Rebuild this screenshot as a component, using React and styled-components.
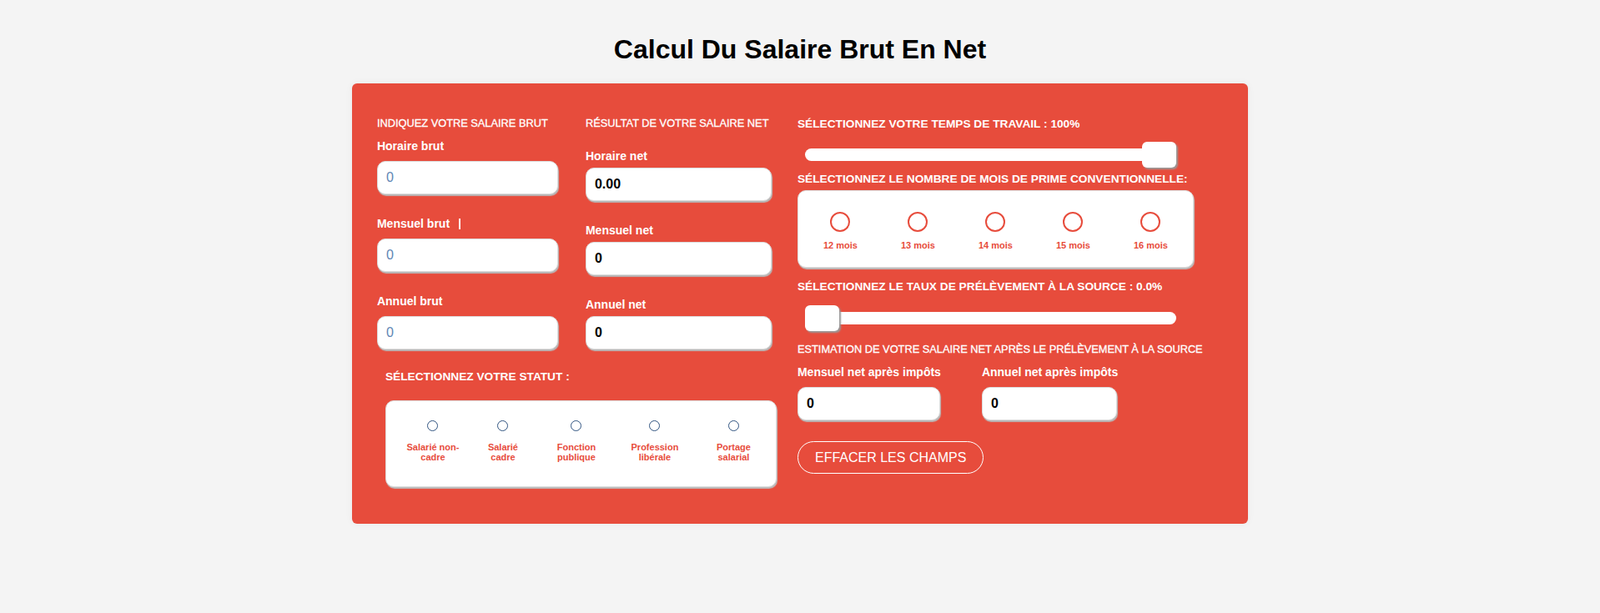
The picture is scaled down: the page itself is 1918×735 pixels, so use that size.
import styled, { createGlobalStyle } from 'styled-components';

const GlobalStyle = createGlobalStyle`
	body {
		margin: 0;
		background: #f4f4f4;
		font-family: 'Liberation Sans', Arial, sans-serif;
	}
`;

const Page = styled.div`
	padding-top: 41px;
	min-height: 100vh;
	box-sizing: border-box;
`;

const Title = styled.h1`
	margin: 0 0 22px;
	font-size: 32px;
	line-height: 37px;
	font-weight: bold;
	text-align: center;
	color: #000;
`;

const Card = styled.div`
	width: 56%;
	margin: 0 auto;
	box-sizing: border-box;
	padding: 40px 30px 44px;
	display: flex;
	align-items: flex-start;
	gap: 25px;
	background: #e74c3c;
	border-radius: 6px;
	box-shadow: 0 0 10px rgba(0, 0, 0, 0.05);
	color: #fff;
`;

const LeftPane = styled.div`
	width: 479px;
	flex-shrink: 0;
`;

const RightPane = styled.div`
	flex: 1;
	padding-top: 1px;
`;

const Columns = styled.div`
	display: flex;
	gap: 33px;
`;

const Column = styled.div`
	width: ${(p) => p.$width}px;
	display: flex;
	flex-direction: column;
`;

const SmallHeading = styled.div`
	font-size: 12.8px;
	line-height: 16px;
	margin-top: ${(p) => p.$top || 0}px;
	white-space: nowrap;
	-webkit-text-stroke: 0.3px #fff;
`;

const Heading = styled.div`
	font-size: 13.7px;
	line-height: 16px;
	font-weight: bold;
	margin-top: ${(p) => p.$top || 0}px;
	white-space: nowrap;
`;

const Field = styled.div`
	display: flex;
	flex-direction: column;
	margin-top: ${(p) => p.$top}px;
`;

const Label = styled.label`
	font-size: 14px;
	line-height: 16px;
	font-weight: bold;
	white-space: nowrap;
`;

const Caret = styled.span`
	display: inline-block;
	width: 2px;
	height: 13px;
	margin-left: 11px;
	vertical-align: -2px;
	background: #fff;
`;

const TextInput = styled.input`
	box-sizing: border-box;
	width: ${(p) => (p.$width ? `${p.$width}px` : '100%')};
	height: 40px;
	margin-top: ${(p) => p.$top}px;
	padding: 0 10px;
	border: 1px solid #dcdcdc;
	border-radius: 10px;
	background: #fff;
	box-shadow: 1px 2px 1px #b9b9b9;
	font-family: 'Liberation Sans', Arial, sans-serif;
	font-size: 16px;
	font-weight: ${(p) => (p.readOnly ? 'bold' : 'normal')};
	color: #000;
	outline: none;

	&::placeholder {
		color: #5f86b5;
	}
`;

const StatusSection = styled.div`
	margin: 25px 0 0 10px;
`;

const WhiteBox = styled.div`
	box-sizing: border-box;
	background: #fff;
	border: 1px solid #dedede;
	border-radius: 10px;
	box-shadow: 1px 2px 1px #bdbdbd;
`;

const StatusBox = styled(WhiteBox)`
	margin-top: 20px;
	height: 104px;
	padding: 23px 0 0 14px;
	display: grid;
	grid-template-columns: 84px 84px 92px 96px 93px;
	align-items: start;
`;

const MonthBox = styled(WhiteBox)`
	margin-top: 5px;
	width: 475px;
	height: 93px;
	padding: 25px 4px 0;
	display: grid;
	grid-template-columns: repeat(5, 1fr);
	align-items: start;
`;

const Option = styled.label`
	display: flex;
	flex-direction: column;
	align-items: center;
	color: #e74c3c;
	font-size: 11px;
	font-weight: bold;
	text-align: center;
	cursor: pointer;
`;

const OptionText = styled.span`
	margin-top: ${(p) => p.$top}px;
	max-width: 64px;
	line-height: ${(p) => p.$lh}px;
`;

const Radio = styled.input`
	appearance: none;
	margin: 0;
	box-sizing: border-box;
	width: ${(p) => p.$size}px;
	height: ${(p) => p.$size}px;
	border-radius: 50%;
	border: ${(p) => p.$stroke}px solid ${(p) => p.$color};
	background: #fff;
	cursor: pointer;
`;

const SliderRow = styled.div`
	height: ${(p) => p.$height}px;
	margin: ${(p) => p.$top}px 0 0 9px;
	display: flex;
	align-items: center;
`;

const Range = styled.input`
	-webkit-appearance: none;
	appearance: none;
	width: 445px;
	height: 15px;
	margin: 0;
	background: transparent;

	&::-webkit-slider-runnable-track {
		height: 15px;
		background: #fff;
		border-radius: 8px;
	}

	&::-webkit-slider-thumb {
		-webkit-appearance: none;
		width: 41px;
		height: 31px;
		margin-top: -8px;
		background: #fff;
		border-radius: 6px;
		box-shadow: 2px 2px 2px #9a9a9a;
		cursor: pointer;
	}
`;

const EstimateRow = styled.div`
	display: flex;
	gap: 49px;
	margin-top: 11px;
`;

const ClearButton = styled.button`
	margin-top: 25px;
	height: 39px;
	padding: 0 20px;
	border: 1px solid #fff;
	border-radius: 20px;
	background: transparent;
	color: #fff;
	font-family: 'Liberation Sans', Arial, sans-serif;
	font-size: 16px;
	cursor: pointer;
`;

const statuses = [
	'Salarié non-cadre',
	'Salarié cadre',
	'Fonction publique',
	'Profession libérale',
	'Portage salarial',
];

const months = ['12 mois', '13 mois', '14 mois', '15 mois', '16 mois'];

const App = () => {
	return (
		<>
			<GlobalStyle />
			<Page>
				<Title>Calcul Du Salaire Brut En Net</Title>
				<Card>
					<LeftPane>
						<Columns>
							<Column $width={217}>
								<SmallHeading>INDIQUEZ VOTRE SALAIRE BRUT</SmallHeading>
								<Field $top={11}>
									<Label>Horaire brut</Label>
									<TextInput $top={10} placeholder="0" />
								</Field>
								<Field $top={27}>
									<Label>
										Mensuel brut
										<Caret />
									</Label>
									<TextInput $top={10} placeholder="0" />
								</Field>
								<Field $top={27}>
									<Label>Annuel brut</Label>
									<TextInput $top={10} placeholder="0" />
								</Field>
							</Column>
							<Column $width={223}>
								<SmallHeading>RÉSULTAT DE VOTRE SALAIRE NET</SmallHeading>
								<Field $top={23}>
									<Label>Horaire net</Label>
									<TextInput $top={6} readOnly value="0.00" />
								</Field>
								<Field $top={27}>
									<Label>Mensuel net</Label>
									<TextInput $top={6} readOnly value="0" />
								</Field>
								<Field $top={27}>
									<Label>Annuel net</Label>
									<TextInput $top={6} readOnly value="0" />
								</Field>
							</Column>
						</Columns>
						<StatusSection>
							<Heading>SÉLECTIONNEZ VOTRE STATUT :</Heading>
							<StatusBox>
								{statuses.map((s) => (
									<Option key={s}>
										<Radio type="radio" name="statut" $size={13} $stroke={1.5} $color="#2f5380" />
										<OptionText $top={13} $lh={12}>
											{s}
										</OptionText>
									</Option>
								))}
							</StatusBox>
						</StatusSection>
					</LeftPane>
					<RightPane>
						<Heading>SÉLECTIONNEZ VOTRE TEMPS DE TRAVAIL : 100%</Heading>
						<SliderRow $top={13} $height={31}>
							<Range type="range" min="0" max="100" defaultValue="100" />
						</SliderRow>
						<Heading $top={6}>SÉLECTIONNEZ LE NOMBRE DE MOIS DE PRIME CONVENTIONNELLE:</Heading>
						<MonthBox>
							{months.map((m) => (
								<Option key={m}>
									<Radio type="radio" name="mois" $size={24} $stroke={2} $color="#e74c3c" />
									<OptionText $top={10} $lh={13}>
										{m}
									</OptionText>
								</Option>
							))}
						</MonthBox>
						<Heading $top={15}>SÉLECTIONNEZ LE TAUX DE PRÉLÈVEMENT À LA SOURCE : 0.0%</Heading>
						<SliderRow $top={13} $height={32}>
							<Range type="range" min="0" max="100" defaultValue="0" />
						</SliderRow>
						<SmallHeading $top={14}>
							ESTIMATION DE VOTRE SALAIRE NET APRÈS LE PRÉLÈVEMENT À LA SOURCE
						</SmallHeading>
						<EstimateRow>
							<Field $top={0}>
								<Label>Mensuel net après impôts</Label>
								<TextInput $top={10} $width={171} readOnly value="0" />
							</Field>
							<Field $top={0}>
								<Label>Annuel net après impôts</Label>
								<TextInput $top={10} $width={162} readOnly value="0" />
							</Field>
						</EstimateRow>
						<ClearButton type="button">EFFACER LES CHAMPS</ClearButton>
					</RightPane>
				</Card>
			</Page>
		</>
	);
};

export default App;
